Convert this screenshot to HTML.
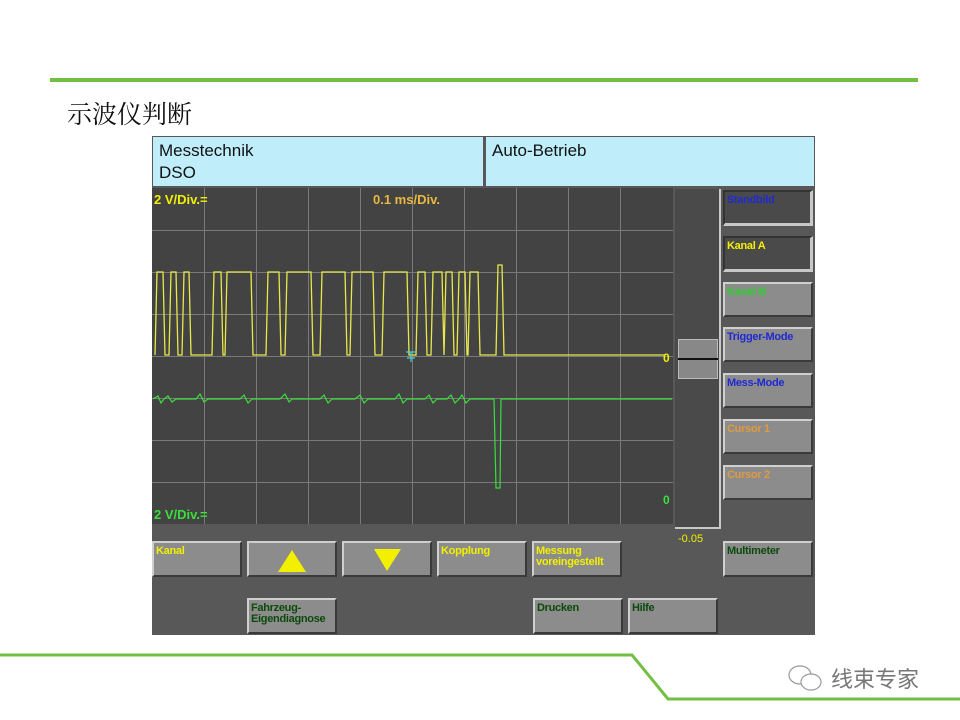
<!DOCTYPE html>
<html><head><meta charset="utf-8"><style>
body{margin:0;width:960px;height:720px;background:#fff;position:relative;overflow:hidden;font-family:"Liberation Sans",sans-serif}
.a{position:absolute}
.title{left:67px;top:95px;font-size:25px;font-family:"Liberation Serif","Noto Serif CJK SC",serif;color:#111}
.hdr{background:#bfeefa;color:#111;font-size:17px;line-height:22px;padding:3px 6px;box-sizing:border-box}
.btn{background:#8c8c8c;border-top:2px solid #cfcfcf;border-left:2px solid #cfcfcf;border-right:2px solid #3a3a3a;border-bottom:2px solid #3a3a3a;box-sizing:border-box;font-weight:bold;font-size:11px;line-height:11px;padding:3px 2px;font-family:"Liberation Sans",sans-serif;letter-spacing:-0.3px}
.dk{background:#4a4a4a;border-top:2px solid #333;border-left:2px solid #333;border-right:3px solid #c8c8c8;border-bottom:3px solid #c8c8c8}
.y{color:#f2f000}.b{color:#1f2ad0}.g{color:#2fd02f}.o{color:#e09a40}.dg{color:#0b4a0b}
</style></head><body>
<div class="a" style="left:50px;top:78px;width:868px;height:4px;background:#72bf44"></div>
<div class="a title">示波仪判断</div>
<div class="a" style="left:152px;top:136px;width:663px;height:499px;background:#585858"></div>
<div class="a hdr" style="left:153px;top:137px;width:330px;height:49px">Messtechnik<br>DSO</div>
<div class="a hdr" style="left:486px;top:137px;width:328px;height:49px">Auto-Betrieb</div>
<svg class="a" style="left:152px;top:188px" width="521" height="336">
<rect width="521" height="336" fill="#434343"/>
<g stroke="#7a7a7a" stroke-width="1">
<line x1="52.5" y1="0" x2="52.5" y2="336"/><line x1="104.5" y1="0" x2="104.5" y2="336"/><line x1="156.5" y1="0" x2="156.5" y2="336"/><line x1="208.5" y1="0" x2="208.5" y2="336"/><line x1="260.5" y1="0" x2="260.5" y2="336"/><line x1="312.5" y1="0" x2="312.5" y2="336"/><line x1="364.5" y1="0" x2="364.5" y2="336"/><line x1="416.5" y1="0" x2="416.5" y2="336"/><line x1="468.5" y1="0" x2="468.5" y2="336"/>
<line x1="0" y1="42.5" x2="521" y2="42.5"/><line x1="0" y1="84.5" x2="521" y2="84.5"/><line x1="0" y1="126.5" x2="521" y2="126.5"/><line x1="0" y1="168.5" x2="521" y2="168.5"/><line x1="0" y1="210.5" x2="521" y2="210.5"/><line x1="0" y1="252.5" x2="521" y2="252.5"/><line x1="0" y1="294.5" x2="521" y2="294.5"/>
</g>
<path transform="translate(-152,-188)" fill="none" stroke="#e8e84a" stroke-width="1.3" d="M155 355 L157 272 L159 272 L161 272 L163 272 L165 355 L169 355 L171 272 L176 272 L178 355 L182 355 L184 272 L189 272 L191 355 L212 355 L214 272 L221 272 L223 355 L225 355 L227 272 L251 272 L253 355 L266 355 L268 272 L279 272 L281 355 L285 355 L287 272 L311 272 L313 355 L320 355 L322 272 L345 272 L347 355 L350 355 L352 272 L373 272 L375 355 L382 355 L384 272 L407 272 L409 355 L416 355 L418 272 L425 272 L427 355 L431 355 L433 272 L442 272 L444 355 L446 272 L452 272 L454 355 L457 355 L459 272 L465 272 L467 355 L468 355 L470 272 L478 272 L480 355 L496 355 L498 265 L502 265 L504 355 L665 355"/>
<path transform="translate(-152,-188)" fill="none" stroke="#3adf3a" stroke-width="1.2" d="M153 399 L158 396 L161 403 L164 399 L168 396 L172 402 L176 399 L196 399 L200 394 L204 402 L208 399 L240 399 L244 395 L248 403 L252 399 L280 399 L285 394 L289 402 L292 399 L320 399 L324 395 L328 403 L332 399 L355 399 L360 395 L364 403 L368 399 L395 399 L399 394 L403 403 L407 399 L425 399 L429 395 L433 403 L437 399 L447 399 L451 395 L455 403 L459 399 L462 395 L466 403 L470 399 L494 399 L496 488 L500 488 L501 399 L672 399"/>
<path transform="translate(-152,-188)" fill="none" stroke="#4ad0d0" stroke-width="1.2" d="M406 352 L416 352 M411 352 L411 362 M407 358 L415 358"/>
<text x="2" y="16" fill="#f2f000" font-size="13" font-weight="bold" font-family="Liberation Sans,sans-serif">2 V/Div.=</text>
<text x="221" y="16" fill="#e8b840" font-size="13" font-weight="bold" font-family="Liberation Sans,sans-serif">0.1 ms/Div.</text>
<text x="511" y="174" fill="#f2f000" font-size="12" font-weight="bold" font-family="Liberation Sans,sans-serif">0</text>
<text x="511" y="316" fill="#3adf3a" font-size="12" font-weight="bold" font-family="Liberation Sans,sans-serif">0</text>
<text x="2" y="331" fill="#3adf3a" font-size="13" font-weight="bold" font-family="Liberation Sans,sans-serif">2 V/Div.=</text>
</svg>
<div class="a" style="left:675px;top:189px;width:46px;height:340px;background:#4a4a4a;border-right:2px solid #c8c8c8;border-bottom:2px solid #c8c8c8;box-sizing:border-box"></div>
<div class="a" style="left:678px;top:339px;width:40px;height:40px;background:#888;border:1px solid #bbb;box-sizing:border-box"></div>
<div class="a" style="left:678px;top:358px;width:40px;height:2px;background:#111"></div>
<div class="a" style="left:678px;top:533px;font-size:11px;color:#f2f000;font-family:'Liberation Sans',sans-serif">-0.05</div>
<div class="a btn dk b" style="left:723px;top:190px;width:90px;height:36px">Standbild</div>
<div class="a btn dk y" style="left:723px;top:236px;width:90px;height:36px">Kanal A</div>
<div class="a btn g" style="left:723px;top:282px;width:90px;height:35px">Kanal B</div>
<div class="a btn b" style="left:723px;top:327px;width:90px;height:35px">Trigger-Mode</div>
<div class="a btn b" style="left:723px;top:373px;width:90px;height:35px">Mess-Mode</div>
<div class="a btn o" style="left:723px;top:419px;width:90px;height:35px">Cursor 1</div>
<div class="a btn o" style="left:723px;top:465px;width:90px;height:35px">Cursor 2</div>
<div class="a btn dg" style="left:723px;top:541px;width:90px;height:36px">Multimeter</div>
<div class="a btn y" style="left:152px;top:541px;width:90px;height:36px">Kanal</div>
<div class="a btn" style="left:247px;top:541px;width:90px;height:36px"><svg width="86" height="32" style="position:absolute;left:0;top:0"><polygon points="43,7 29,29 57,29" fill="#f2f000"/></svg></div>
<div class="a btn" style="left:342px;top:541px;width:90px;height:36px"><svg width="86" height="32" style="position:absolute;left:0;top:0"><polygon points="30,6 57,6 43,28" fill="#f2f000"/></svg></div>
<div class="a btn y" style="left:437px;top:541px;width:90px;height:36px">Kopplung</div>
<div class="a btn y" style="left:532px;top:541px;width:90px;height:36px">Messung<br>voreingestellt</div>
<div class="a btn dg" style="left:247px;top:598px;width:90px;height:36px">Fahrzeug-<br>Eigendiagnose</div>
<div class="a btn dg" style="left:533px;top:598px;width:90px;height:36px">Drucken</div>
<div class="a btn dg" style="left:628px;top:598px;width:90px;height:36px">Hilfe</div>
<svg class="a" style="left:0;top:640px" width="960" height="80"><polyline points="0,15 632,15 668,59 960,59" fill="none" stroke="#72bf44" stroke-width="3"/>
<g fill="none" stroke="#999" stroke-width="1.2"><ellipse cx="800" cy="35" rx="11" ry="9"/><ellipse cx="811" cy="42" rx="10" ry="8" fill="#fff"/></g></svg>
<div class="a" style="left:831px;top:662px;font-size:22px;color:#777;font-family:'Liberation Sans','Noto Sans CJK SC',sans-serif">线束专家</div>
</body></html>
